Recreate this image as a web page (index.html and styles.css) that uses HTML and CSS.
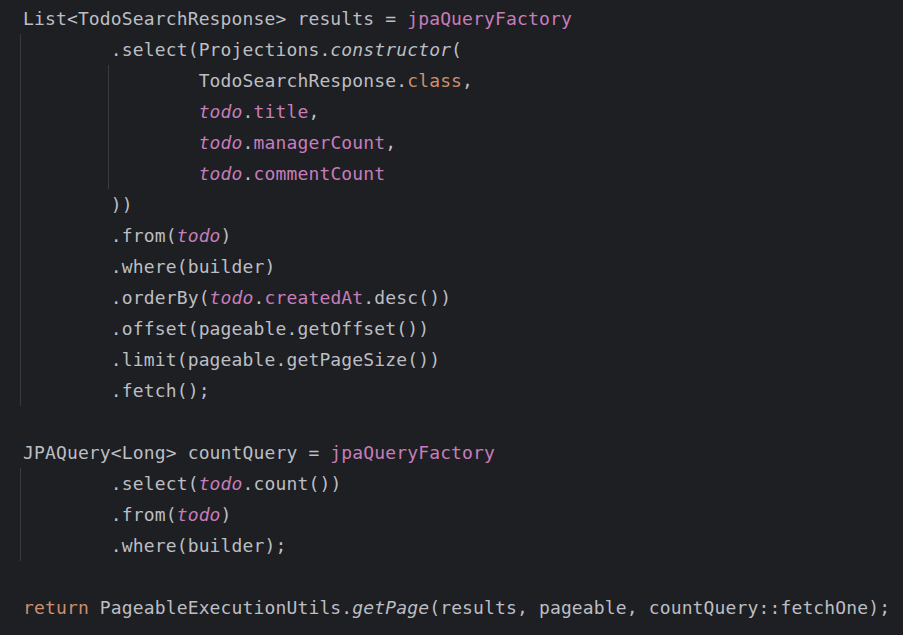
FILE: index.html
```html
<!DOCTYPE html>
<html lang="en">
<head>
<meta charset="utf-8">
<title>QueryDSL search</title>
<link rel="stylesheet" href="styles.css">
</head>
<body>
<div class="editor">
  <div class="code">
    <div class="ln">List&lt;TodoSearchResponse&gt; results = <span class="f">jpaQueryFactory</span></div>
    <div class="block">
      <div class="ln">        .select(Projections.<span class="sm">constructor</span>(</div>
      <div class="block inner">
        <div class="ln">                TodoSearchResponse.<span class="k">class</span>,</div>
        <div class="ln">                <span class="sf">todo</span>.<span class="f">title</span>,</div>
        <div class="ln">                <span class="sf">todo</span>.<span class="f">managerCount</span>,</div>
        <div class="ln">                <span class="sf">todo</span>.<span class="f">commentCount</span></div>
      </div>
      <div class="ln">        ))</div>
      <div class="ln">        .from(<span class="sf">todo</span>)</div>
      <div class="ln">        .where(builder)</div>
      <div class="ln">        .orderBy(<span class="sf">todo</span>.<span class="f">createdAt</span>.desc())</div>
      <div class="ln">        .offset(pageable.getOffset())</div>
      <div class="ln">        .limit(pageable.getPageSize())</div>
      <div class="ln">        .fetch();</div>
    </div>
    <div class="ln"> </div>
    <div class="ln">JPAQuery&lt;Long&gt; countQuery = <span class="f">jpaQueryFactory</span></div>
    <div class="block">
      <div class="ln">        .select(<span class="sf">todo</span>.count())</div>
      <div class="ln">        .from(<span class="sf">todo</span>)</div>
      <div class="ln">        .where(builder);</div>
    </div>
    <div class="ln"> </div>
    <div class="ln"><span class="k">return</span> PageableExecutionUtils.<span class="sm">getPage</span>(results, pageable, countQuery::fetchOne);</div>
  </div>
</div>
</body>
</html>
```
FILE: styles.css
```css
html, body {
  margin: 0;
  padding: 0;
  background: #1e1f22;
}

.editor {
  width: 903px;
  height: 635px;
  overflow: hidden;
  background: #1e1f22;
}

.code {
  padding: 3px 0 0 20px;
  font-family: "DejaVu Sans Mono", "Liberation Mono", monospace;
  font-size: 18px;
  letter-spacing: 0.14px;
  color: #bcbec4;
}

.ln {
  height: 31px;
  line-height: 31px;
  padding-left: 3px;
  white-space: pre;
}

.block {
  background-image: linear-gradient(#393b40, #393b40);
  background-repeat: no-repeat;
  background-size: 1px 100%;
  background-position: 0 0;
}

.block.inner {
  background-position: calc(8ch + 1px) 0;
}

.f { color: #c77dbb; }
.sf { color: #c77dbb; font-style: italic; }
.k { color: #cf8e6d; }
.sm { font-style: italic; }
```
